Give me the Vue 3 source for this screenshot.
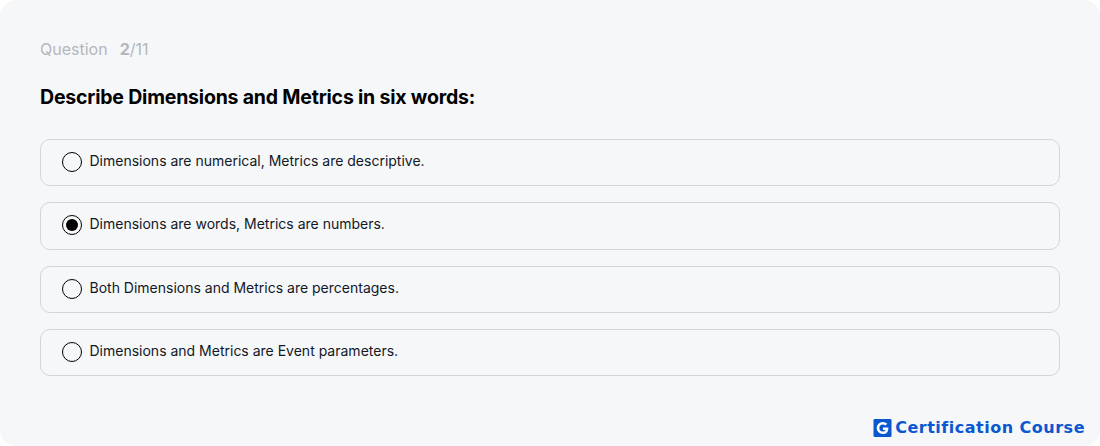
<script setup>
const options = [
  { text: 'Dimensions are numerical, Metrics are descriptive.', checked: false },
  { text: 'Dimensions are words, Metrics are numbers.', checked: true },
  { text: 'Both Dimensions and Metrics are percentages.', checked: false },
  { text: 'Dimensions and Metrics are Event parameters.', checked: false },
]
</script>

<template>
  <main class="card">
    <div class="counter">
      <span>Question</span>
      <span class="count"><b>2</b>/11</span>
    </div>
    <h1 class="title">Describe Dimensions and Metrics in six words:</h1>
    <ul class="options">
      <li v-for="o in options" :key="o.text" class="option">
        <span class="radio" :class="{ checked: o.checked }"></span>
        <span class="label">{{ o.text }}</span>
      </li>
    </ul>
    <footer class="brand">
      <svg class="logo" viewBox="0 0 20 20" width="19" height="18" aria-hidden="true">
        <rect width="20" height="20" rx="1.500" fill="#0b57d0" />
        <path d="M15.400 5.400A7 7 0 0 0 10.300 3.200a6.800 6.800 0 1 0 0 13.600c4 0 6.500-2.700 6.200-7.400h-6v2.800h2.800c-.4 1.100-1.400 1.700-2.900 1.700a3.900 3.900 0 1 1 0-7.800c1.200 0 2.100.4 2.900 1.100z" fill="#fff" />
      </svg>
      <span class="brand-text">Certification Course</span>
    </footer>
  </main>
</template>

<style>
html, body { margin: 0; background: #fff; }
</style>

<style scoped>
.card {
  box-sizing: border-box;
  height: 446px;
  width: 1100px;
  background: #f6f7f9;
  border-radius: 16px;
  padding: 39px 40px 0;
  position: relative;
  font-family: Inter, "Liberation Sans", sans-serif;
}
.counter {
  display: flex;
  gap: 12px;
  color: #b4b7bc;
  font-size: 16px;
  line-height: 20px;
}
.count b { font-weight: 700; }
.title {
  margin: 25px 0 0;
  font-family: Inter, sans-serif;
  font-size: 19.5px;
  line-height: 26px;
  font-weight: 700;
  letter-spacing: -0.2px;
  color: #000;
}
.options {
  list-style: none;
  margin: 29px 0 0;
  padding: 0;
  width: 1020px;
  display: flex;
  flex-direction: column;
  gap: 16.15px;
}
.option {
  box-sizing: border-box;
  height: 47.25px;
  border: 1px solid #d3d5da;
  border-radius: 10px;
  display: flex;
  align-items: center;
  padding-left: 21px;
  gap: 7.5px;
}
.radio {
  box-sizing: border-box;
  width: 20px;
  height: 20px;
  margin-top: -1.2px;
  border: 1px solid #000;
  border-radius: 50%;
  display: flex;
  align-items: center;
  justify-content: center;
  flex: none;
}
.radio.checked::after {
  content: "";
  width: 12px;
  height: 12px;
  border-radius: 50%;
  background: #000;
}
.label {
  font-size: 14px;
  line-height: 20px;
  color: #111827;
  margin-top: -3.7px;
}
.brand {
  position: absolute;
  right: 15px;
  bottom: 8px;
  display: flex;
  align-items: center;
  gap: 3px;
}
.brand-text {
  font-family: "DejaVu Sans", sans-serif;
  font-size: 16px;
  font-weight: 700;
  letter-spacing: 0.5px;
  color: #0b57d0;
  line-height: 20px;
}
</style>
